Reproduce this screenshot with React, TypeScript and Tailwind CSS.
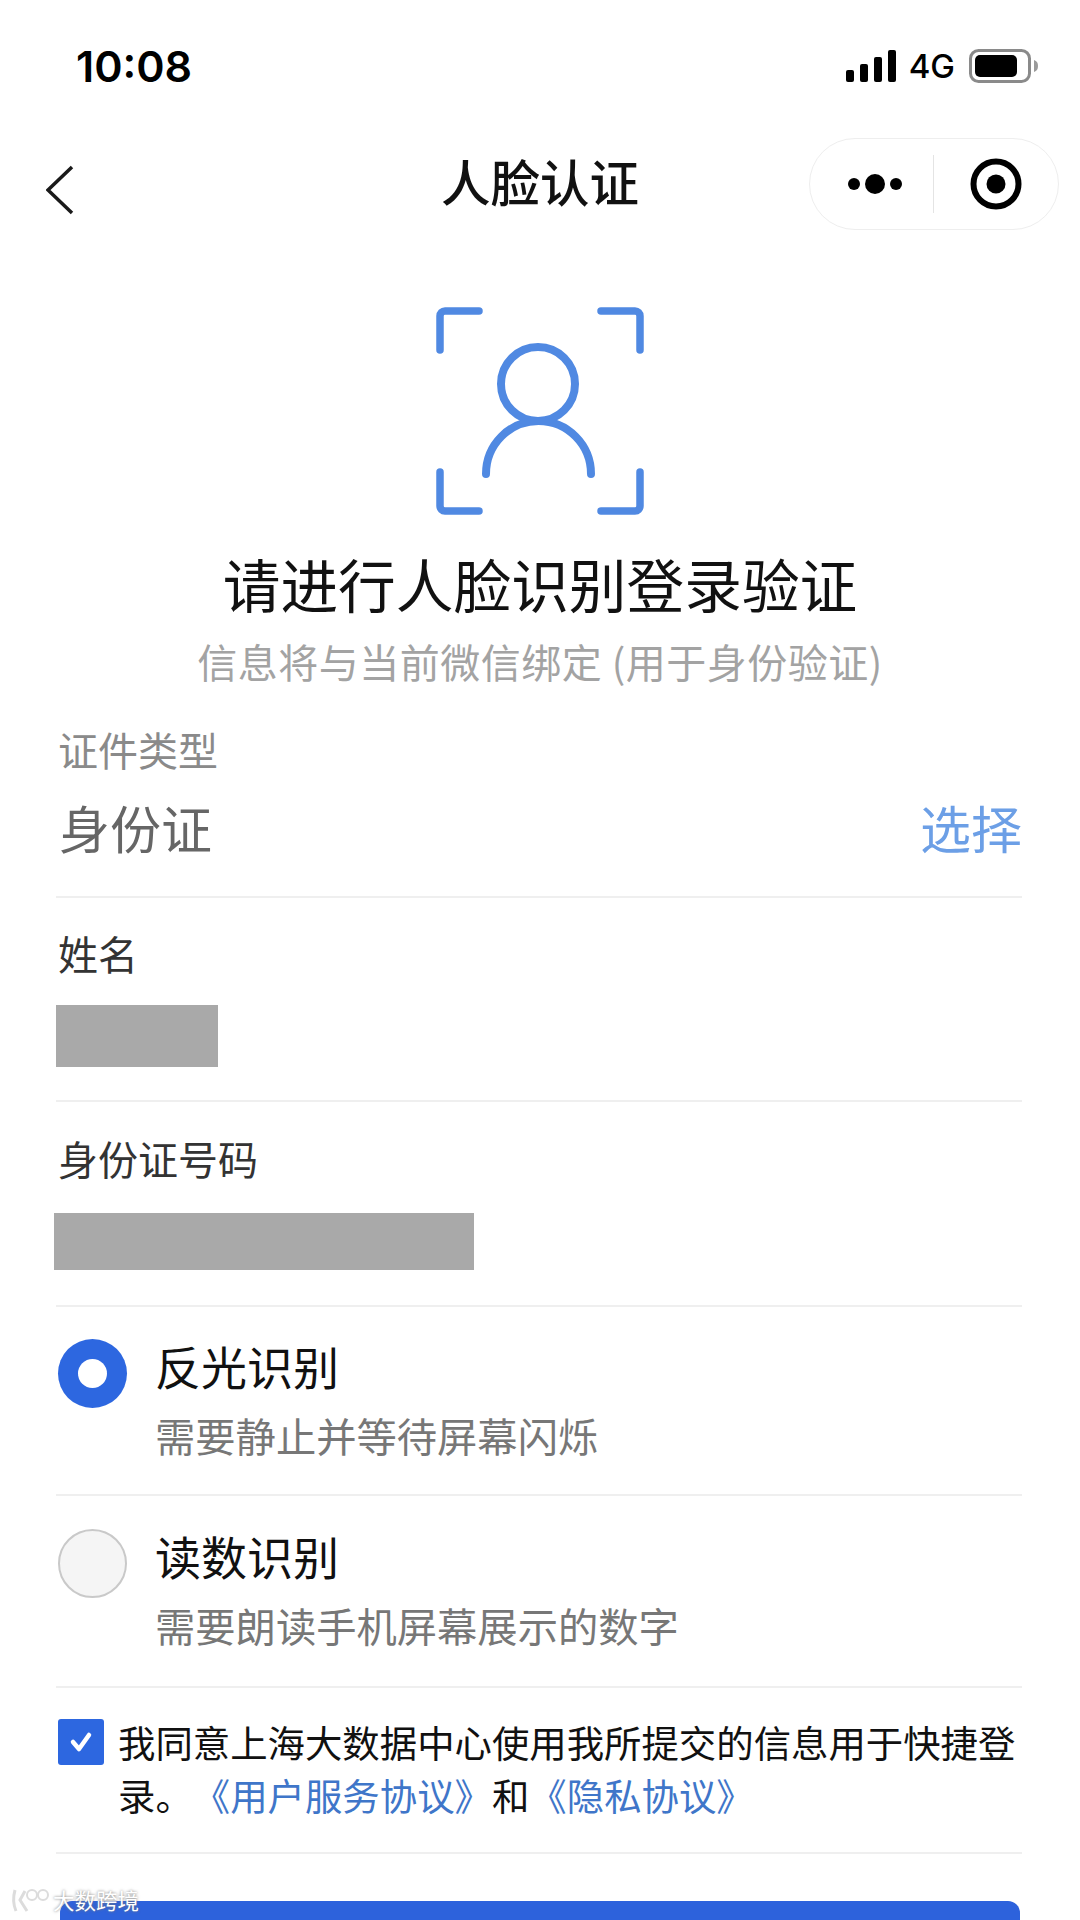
const cjk = "font-['Noto_Sans_CJK_SC','Noto_Sans',sans-serif] [text-spacing-trim:space-all]";

function StatusBar() {
  return (
    <div className="flex h-[132px] items-center justify-between pl-[76px] pr-[41px]">
      <span className="font-['Inter',sans-serif] text-[43px] font-semibold leading-none text-black">10:08</span>
      <div className="flex items-center">
        <svg width="50" height="32" viewBox="0 0 50 32" fill="#000">
          <rect x="0" y="20" width="8" height="12" rx="2" />
          <rect x="14" y="14" width="8" height="18" rx="2" />
          <rect x="28" y="7" width="8" height="25" rx="2" />
          <rect x="42" y="0" width="8" height="32" rx="2" />
        </svg>
        <span className="ml-[13px] font-['Inter',sans-serif] text-[33px] font-medium leading-none text-black">4G</span>
        <svg width="70" height="34" viewBox="0 0 70 34" className="ml-[14px]">
          <rect x="1.5" y="1.5" width="59" height="31" rx="8" fill="none" stroke="#8a8a8a" strokeWidth="3" />
          <rect x="6" y="6" width="42" height="22" rx="5" fill="#000" />
          <path d="M65 11c3 1 4 3 4 6s-1 5-4 6z" fill="#9a9a9a" />
        </svg>
      </div>
    </div>
  );
}

function NavBar() {
  return (
    <div className="relative flex h-[108px] items-center justify-center">
      <svg width="28" height="50" viewBox="0 0 28 50" fill="none" className="absolute left-[46px] top-[33px]">
        <path d="M26 2 2 25l24 23" stroke="#1a1a1a" strokeWidth="3.5" />
      </svg>
      <span className="mb-[10px] text-[49.5px] font-medium leading-none text-[#111]">人脸认证</span>
      <div className="absolute left-[809px] top-[6px] flex h-[92px] w-[250px] items-center rounded-full border border-[#eeeeee] bg-white">
        <svg width="54" height="20" viewBox="0 0 54 20" fill="#000" className="ml-[38px]">
          <circle cx="6" cy="10" r="6" />
          <circle cx="27" cy="10" r="10" />
          <circle cx="48" cy="10" r="6" />
        </svg>
        <div className="ml-[31px] h-[58px] w-px bg-[#e4e4e4]" />
        <svg width="52" height="52" viewBox="0 0 52 52" className="ml-[36px]">
          <circle cx="26" cy="26" r="22.5" fill="none" stroke="#000" strokeWidth="6" />
          <circle cx="26" cy="26" r="9.5" fill="#000" />
        </svg>
      </div>
    </div>
  );
}

function FaceIcon() {
  return (
    <svg width="208" height="208" viewBox="0 0 208 208" fill="none" stroke="#5089e2" strokeWidth="7.5" strokeLinecap="round" strokeLinejoin="round">
      <path d="M4 43V9a5 5 0 0 1 5-5h34M165 4h34a5 5 0 0 1 5 5v34M4 165v34a5 5 0 0 0 5 5h34M165 204h34a5 5 0 0 0 5-5v-34" />
      <circle cx="102" cy="77" r="37" strokeWidth="8" />
      <path d="M50 167a52.5 53 0 0 1 105 0" strokeWidth="8" />
    </svg>
  );
}

function Divider() {
  return <div className="h-[2px] bg-[#efefef]" />;
}

function Radio({ checked }: { checked: boolean }) {
  return checked ? (
    <div className="flex h-[69px] w-[69px] items-center justify-center rounded-full bg-[#2d67e0]">
      <div className="h-[29px] w-[29px] rounded-full bg-white" />
    </div>
  ) : (
    <div className="h-[69px] w-[69px] rounded-full border-[2px] border-[#c9c9c9] bg-[#f5f5f5]" />
  );
}

function Option({ title, desc, checked, h, pt }: { title: string; desc: string; checked: boolean; h: string; pt: string }) {
  return (
    <div className={`flex ${h} ${pt} pl-[2px]`}>
      <Radio checked={checked} />
      <div className="ml-[28px] flex flex-col">
        <span className="-mt-[4px] text-[46px] leading-[60px] text-[#111]">{title}</span>
        <span className="mt-[15px] text-[40.3px] leading-[50px] text-[#777777]">{desc}</span>
      </div>
    </div>
  );
}

export default function App() {
  return (
    <div className={`${cjk} relative h-[1920px] w-[1080px] overflow-hidden bg-white`}>
      <StatusBar />
      <NavBar />
      <div className="mt-[67px] flex justify-center">
        <FaceIcon />
      </div>
      <div className="mt-[33px] text-center text-[57.7px] leading-[70px] text-[#111]">请进行人脸识别登录验证</div>
      <div className="mt-[19px] text-center text-[40px] leading-[48px] tracking-[0.5px] text-[#a3a3a3]">信息将与当前微信绑定 (用于身份验证)</div>

      <div className="pl-[56px] pr-[58px]">
        <div className="h-[211px] pt-[40px]">
          <div className="ml-[2px] text-[40px] leading-[48px] text-[#8a8a8a]">证件类型</div>
          <div className="mt-[19px] flex items-center justify-between pl-[3px]">
            <span className="text-[51px] leading-[70px] text-[#666666]">身份证</span>
            <span className="text-[51px] leading-[70px] text-[#6c9fe6]">选择</span>
          </div>
        </div>
        <Divider />
        <div className="h-[202px] pt-[31px]">
          <div className="ml-[2px] text-[40px] leading-[48px] text-[#333333]">姓名</div>
          <div className="mt-[28px] h-[62px] w-[162px] bg-[#a9a9a9]" />
        </div>
        <Divider />
        <div className="h-[203px] pt-[32px]">
          <div className="ml-[2px] text-[40px] leading-[48px] text-[#333333]">身份证号码</div>
          <div className="ml-[-2px] mt-[31px] h-[57px] w-[420px] bg-[#a9a9a9]" />
        </div>
        <Divider />
        <Option title="反光识别" desc="需要静止并等待屏幕闪烁" checked h="h-[187px]" pt="pt-[32px]" />
        <Divider />
        <Option title="读数识别" desc="需要朗读手机屏幕展示的数字" checked={false} h="h-[190px]" pt="pt-[33px]" />
        <Divider />
        <div className="flex h-[164px] pt-[31px] pl-[2px]">
          <div className="flex h-[46px] w-[46px] shrink-0 items-center justify-center rounded-[3px] bg-[#2d67e0]">
            <svg width="26" height="24" viewBox="0 0 26 24" fill="none">
              <path d="M5 12l6 7L21 5" stroke="#fff" strokeWidth="4.5" strokeLinecap="round" strokeLinejoin="round" />
            </svg>
          </div>
          <p className="-mt-[3px] ml-[14px] w-[905px] text-[37.4px] leading-[53px] text-[#111]">
            我同意上海大数据中心使用我所提交的信息用于快捷登录。<span className="text-[#3f76c9]">《用户服务协议》</span>和<span className="text-[#3f76c9]">《隐私协议》</span>
          </p>
        </div>
        <Divider />
        <div className="ml-[4px] mt-[47px] h-[100px] w-[960px] rounded-[12px] bg-[#2d62dc]" />
      </div>

      <div className="absolute left-[10px] top-[1886px] flex items-center gap-[3px]">
        <svg width="40" height="28" viewBox="0 0 40 28" fill="none" stroke="#dcdcdc" strokeWidth="3">
          <path d="M5 4c-2 7-2 14 1 21M15 5 10 14l7 11" />
          <circle cx="22" cy="9" r="5" strokeWidth="2" />
          <circle cx="33" cy="9" r="5" strokeWidth="2" />
        </svg>
        <span className="text-[21.5px] leading-none text-white [text-shadow:0_0_3px_#777777]">大数跨境</span>
      </div>
    </div>
  );
}
